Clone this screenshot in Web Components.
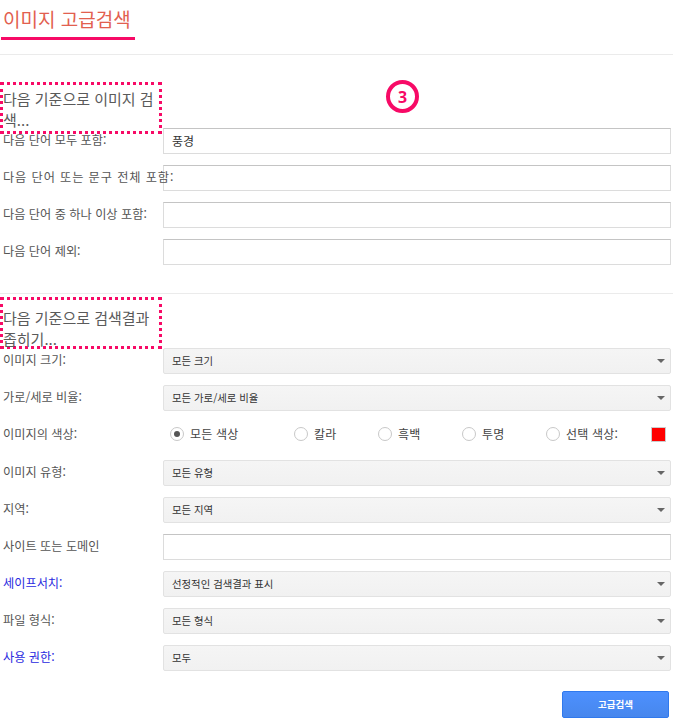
<!DOCTYPE html>
<html lang="ko"><head><meta charset="utf-8">
<style>
html,body{margin:0;padding:0;background:#fff}
body{font-family:"Noto Sans CJK KR","Noto Sans",sans-serif;width:673px;height:720px;overflow:hidden}
</style></head><body>
<search-page></search-page>
<script>
const F='"Noto Sans CJK KR","Noto Sans",sans-serif';
const P='#f70a66';
function def(name,css,html){
  customElements.define(name,class extends HTMLElement{
    connectedCallback(){
      if(this.shadowRoot)return;
      const r=this.attachShadow({mode:'open'});
      const attrs={};for(const a of this.attributes)attrs[a.name]=a.value;
      r.innerHTML='<style>'+css+'</style>'+(typeof html==='function'?html(attrs):html);
    }
  });
}
def('page-title',`:host{display:block;height:55px;box-sizing:border-box;border-bottom:1px solid #ebebeb}
 h1{display:inline-block;margin:0 0 0 1px;padding:0 2px;width:134px;height:40px;box-sizing:border-box;border-bottom:3px solid ${P};font:400 19px/37px ${F};color:#e2604f;white-space:nowrap}`,
 '<h1><slot></slot></h1>');
def('section-head',`:host{display:block;position:relative;z-index:1;box-sizing:border-box;width:162px;height:52px;margin-bottom:-6px;border:3px dotted ${P};padding:3px 0 0 0;font:400 15px/21px ${F};color:#5a5a5a;pointer-events:none}
 :host(.s2){padding-top:7px;margin-bottom:-1px}`,
 '<div><slot></slot></div>');
def('step-badge',`:host{position:absolute;left:386px;top:80px;width:33px;height:33px;box-sizing:border-box;border:4px solid ${P};border-radius:50%;display:flex;align-items:center;justify-content:center;font:700 16px/1 "Open Sans",sans-serif;color:${P}}`,
 '<slot></slot>');
def('form-row',`:host{display:grid;grid-template-columns:163px 508px;height:26px;margin-bottom:11px;align-items:center;font:400 12.2px/18px ${F};color:#555}
 :host([tall]){margin-bottom:12px}
 .l{padding-left:3px;white-space:nowrap;position:relative;top:-1px}
 :host([wide]) .l{letter-spacing:.9px}
 :host([link]) .l{color:#2a2ae0}`,
 a=>`<div class="l">${a.label}</div><div><slot></slot></div>`);
def('text-box',`:host{display:block;box-sizing:border-box;height:26px;border:1px solid #dcdcdc;border-top-color:#c4c4c4;background:#fff;padding:0 8px;font:400 12px/24px ${F};color:#333}`,
 '<slot></slot>');
def('select-box',`:host{display:flex;justify-content:space-between;align-items:center;box-sizing:border-box;height:26px;border:1px solid #e2e2e2;border-radius:2px;background:linear-gradient(#f5f5f5,#f1f1f1);padding:0 5px 0 8px;font:400 10.4px/24px ${F};color:#333}
 i{width:0;height:0;border:4px solid transparent;border-top:4px solid #666;border-bottom:0}`,
 '<span><slot></slot></span><i></i>');
def('radio-row',`:host{display:flex;align-items:center;height:26px;padding-left:7px;font:400 12px/18px ${F};color:#444}`,
 '<slot></slot>');
def('radio-opt',`:host{display:flex;align-items:center;gap:6px;width:84px;flex:none;letter-spacing:.2px;position:relative;top:-1px}
 :host([on]){width:124px}
 b{box-sizing:border-box;width:14px;height:14px;border:1px solid #c8c8c8;border-radius:50%;background:#fff;display:flex;align-items:center;justify-content:center;flex:none}
 :host([on]) b::after{content:"";width:6px;height:6px;border-radius:50%;background:#555}`,
 '<b></b><span><slot></slot></span>');
def('color-chip',`:host{display:block;width:15px;height:15px;box-sizing:border-box;background:#f00;border:1px solid #ccc;margin-left:auto;margin-right:5px;position:relative;top:-1px}`,'');
def('action-btn',`:host{display:flex;align-items:center;justify-content:center;box-sizing:border-box;width:107px;height:27px;margin:20px 0 0 562px;border:1px solid #3079ed;border-radius:2px;background:linear-gradient(#4d90fe,#4787ed);color:#fff;font:700 9.5px/1 ${F}}`,
 '<slot></slot>');
def('search-page',`:host{display:block;position:relative;width:673px;height:720px}
 .s1{margin-top:27px}
 .rule{height:1px;background:#ebebeb;margin:28px 0 3px 0}`,
 `<page-title>이미지 고급검색</page-title>
 <step-badge>3</step-badge>
 <section-head class="s1">다음 기준으로 이미지 검색...</section-head>
 <form-row label="다음 단어 모두 포함:"><text-box>풍경</text-box></form-row>
 <form-row wide label="다음 단어 또는 문구 전체 포함:"><text-box></text-box></form-row>
 <form-row label="다음 단어 중 하나 이상 포함:"><text-box></text-box></form-row>
 <form-row label="다음 단어 제외:"><text-box></text-box></form-row>
 <div class="rule"></div>
 <section-head class="s2">다음 기준으로 검색결과 좁히기...</section-head>
 <form-row label="이미지 크기:"><select-box>모든 크기</select-box></form-row>
 <form-row label="가로/세로 비율:"><select-box>모든 가로/세로 비율</select-box></form-row>
 <form-row tall label="이미지의 색상:"><radio-row><radio-opt on>모든 색상</radio-opt><radio-opt>칼라</radio-opt><radio-opt>흑백</radio-opt><radio-opt>투명</radio-opt><radio-opt style="width:auto">선택 색상:</radio-opt><color-chip></color-chip></radio-row></form-row>
 <form-row label="이미지 유형:"><select-box>모든 유형</select-box></form-row>
 <form-row label="지역:"><select-box>모든 지역</select-box></form-row>
 <form-row label="사이트 또는 도메인"><text-box></text-box></form-row>
 <form-row link label="세이프서치:"><select-box>선정적인 검색결과 표시</select-box></form-row>
 <form-row label="파일 형식:"><select-box>모든 형식</select-box></form-row>
 <form-row link label="사용 권한:"><select-box>모두</select-box></form-row>
 <action-btn>고급검색</action-btn>`);
</script>
</body></html>
